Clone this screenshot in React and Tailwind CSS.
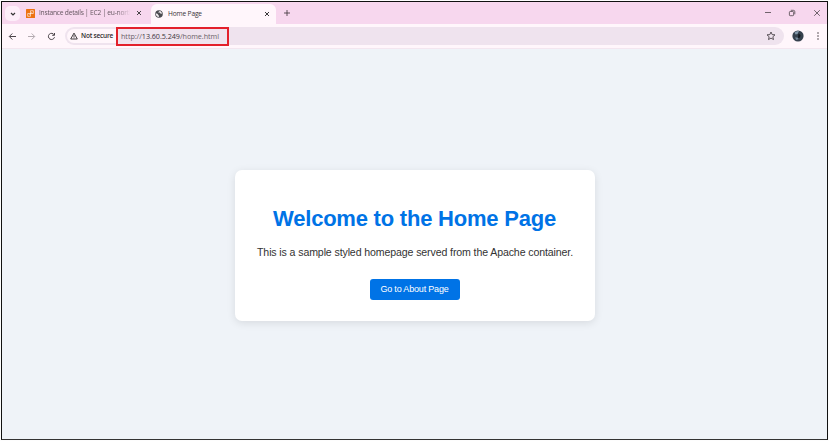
function Glyph({ className, children, box = 12, sw = 1.1 }) {
  return (
    <svg viewBox={`0 0 ${box} ${box}`} className={`shrink-0 ${className}`} fill="none" stroke="currentColor" strokeWidth={sw}>
      {children}
    </svg>
  );
}

function TabStrip() {
  return (
    <div className="flex h-[22px] shrink-0 items-stretch bg-[#f7d7ee]">
      <button className="ml-[3px] mt-[4px] flex h-[15px] w-[15px] items-center justify-center rounded-[5px] bg-[#fdeef9] text-[#333]">
        <Glyph className="h-[6px] w-[6px]" box={6} sw={1.2}><path d="M1 2l2 2 2-2" /></Glyph>
      </button>
      <div className="ml-[6px] flex w-[125px] items-center">
        <svg viewBox="0 0 9 9" className="h-[9px] w-[9px] shrink-0">
          <rect width="9" height="9" rx="0.6" fill="#ed7211" />
          <path d="M4.500 1.700h2.800v2.800H4.500zM1.700 4.500h2.800v2.800H1.700zM3.400 5.600l2.200-2.200" fill="none" stroke="#fff" strokeWidth="0.6" />
        </svg>
        <div className="ml-[4px] w-[91px] whitespace-nowrap bg-linear-to-r from-[#5d5059] from-85% to-[#f7d7ee] bg-clip-text text-[6.700px] leading-[10px] tracking-[-0.250px] text-transparent">
          Instance details | EC2 | eu-north
        </div>
        <Glyph className="ml-[6px] h-[6px] w-[6px] text-[#333]" box={6} sw={0.9}><path d="M1 1l4 4M5 1L1 5" /></Glyph>
      </div>
      <div className="mt-[2px] flex w-[125px] items-center rounded-t-[6px] bg-[#fff6fb] pb-[1px] text-[#3a3538]">
        <svg viewBox="0 0 8 8" className="ml-[4px] h-[8px] w-[8px] shrink-0">
          <circle cx="4" cy="4" r="3.8" fill="#4b4b50" />
          <path d="M.8 3.5c1.3 0 2 .5 2.4 1.3.5.8 1 .8.6 2.3C2.2 7 .8 5.5.8 3.5zM4.6.9C4 1.7 3.3 1.7 3.4 2.600c.8.400 1.400 0 1.900.600.400.700 1.200.600 1.800.400C6.900 2.200 6 1.200 4.600.900z" fill="#f2edf0" />
        </svg>
        <div className="ml-[5px] w-[91px] whitespace-nowrap text-[6.600px] leading-[10px] tracking-[-0.150px]">Home Page</div>
        <Glyph className="ml-[5px] h-[6px] w-[6px] text-[#222]" box={6} sw={0.9}><path d="M1 1l4 4M5 1L1 5" /></Glyph>
      </div>
      <div className="ml-[7px] flex items-center text-[#4a4046]">
        <Glyph className="h-[8px] w-[8px]" box={8} sw={0.9}><path d="M4 1v6M1 4h6" /></Glyph>
      </div>
      <div className="ml-auto flex items-center pr-[6px] text-[#4d454a]">
        <Glyph className="h-[8px] w-[8px]" box={8} sw={0.8}><path d="M1 3.500h6" /></Glyph>
        <Glyph className="ml-[16px] h-[8px] w-[8px]" box={8} sw={0.8}>
          <rect x="1.400" y="2.500" width="4.200" height="4.200" rx="0.800" />
          <path d="M2.800 1.300h2.600q1.400 0 1.400 1.400v2.600" />
        </Glyph>
        <Glyph className="ml-[17px] h-[8px] w-[8px]" box={8} sw={0.8}><path d="M1.200 1.200l5.600 5.600M6.800 1.200L1.200 6.800" /></Glyph>
      </div>
    </div>
  );
}

function Toolbar() {
  return (
    <div className="flex h-[25px] shrink-0 items-center border-b border-[#f3e6ef] bg-[#fff6fb] text-[#4b4449]">
      <Glyph className="ml-[6px] h-[9px] w-[9px]" box={9} sw={1}><path d="M8 4.500H1.500M4.300 1.500l-3 3 3 3" /></Glyph>
      <Glyph className="ml-[10px] h-[9px] w-[9px] text-[#aaa1a7]" box={9} sw={0.9}><path d="M1 4.500h6.500M4.700 1.500l3 3-3 3" /></Glyph>
      <Glyph className="ml-[11px] h-[9px] w-[9px]" box={9} sw={1}>
        <path d="M7.200 2.900A3.100 3.100 0 1 0 7.500 5.200M7.500 1v2.300H5.200" />
      </Glyph>
      <div className="ml-[9px] flex h-[18px] w-[719px] items-center rounded-full bg-[#efe3ee]">
        <div className="ml-[2px] flex h-[14px] w-[49px] shrink-0 items-center rounded-l-full bg-[#fff6fb] pl-[3px] text-[#2f2a2d]">
          <Glyph className="h-[8px] w-[8px]" box={8} sw={0.9}><path d="M4 1.100L7.300 7H.7zM4 3.200v1.700M4 5.400v.8" /></Glyph>
          <span className="ml-[3px] whitespace-nowrap text-[6.500px] font-semibold leading-[10px] tracking-[-0.200px]">Not secure</span>
        </div>
        <div className="flex h-[19px] w-[113px] shrink-0 items-center whitespace-nowrap border-2 border-[#e3202b] pl-[3px] text-[7.200px] leading-[10px] tracking-[-0.040px] text-[#6b6269]">
          <span>http://<span className="text-[#3b353a]">13.60.5.249</span>/home.html</span>
        </div>
        <Glyph className="ml-auto mr-[8px] h-[10px] w-[10px]" box={10} sw={0.9}>
          <path d="M5 1l1.150 2.600 2.850.25-2.150 1.900.65 2.800L5 7.100 2.500 8.550l.65-2.800L1 3.850l2.850-.25z" />
        </Glyph>
      </div>
      <svg viewBox="0 0 12 12" className="ml-[8px] h-[12px] w-[12px] shrink-0">
        <circle cx="6" cy="6" r="5.600" fill="#35404d" />
        <path d="M2.500 2.500q2-2 4.500-1.500L5.500 4l-2 .5z" fill="#8397aa" />
        <path d="M6.500 3.500l2 1.500-.5 2.500-2 .5z" fill="#11161d" />
        <path d="M3 7.500h2.500l1 1.500-2 1z" fill="#75889b" />
      </svg>
      <svg viewBox="0 0 2 8" className="ml-[13px] h-[8px] w-[2px] shrink-0" fill="currentColor">
        <circle cx="1" cy="1" r=".8" /><circle cx="1" cy="4" r=".8" /><circle cx="1" cy="7" r=".8" />
      </svg>
    </div>
  );
}

export default function App() {
  return (
    <div className="h-[441px] w-[829px] bg-[#fdfdfd] pl-px pt-px font-['Open_Sans','Noto_Sans',sans-serif]">
      <div className="flex h-[439px] w-[827px] flex-col overflow-hidden border border-[#111] border-b-[#333]">
        <TabStrip />
        <Toolbar />
        <main className="flex flex-1 justify-center bg-[#eff3f8] font-['Liberation_Sans',Arial,sans-serif]">
          <section className="mt-[121px] flex h-[151px] w-[360px] flex-col items-center rounded-[7px] bg-white shadow-[0_2px_8px_rgba(0,0,0,0.1)]">
            <h1 className="mt-[35px] whitespace-nowrap text-[22px] font-bold leading-[27px] tracking-[-0.220px] text-[#0073e6]">Welcome to the Home Page</h1>
            <p className="mt-[12px] whitespace-nowrap pl-px text-[10.600px] leading-[16px] tracking-[-0.120px] text-[#333]">This is a sample styled homepage served from the Apache container.</p>
            <a className="mt-[19px] flex h-[21px] w-[90px] items-center justify-center whitespace-nowrap rounded-[3px] bg-[#0073e6] text-[9px] tracking-[-0.180px] text-white">Go to About Page</a>
          </section>
        </main>
      </div>
    </div>
  );
}
